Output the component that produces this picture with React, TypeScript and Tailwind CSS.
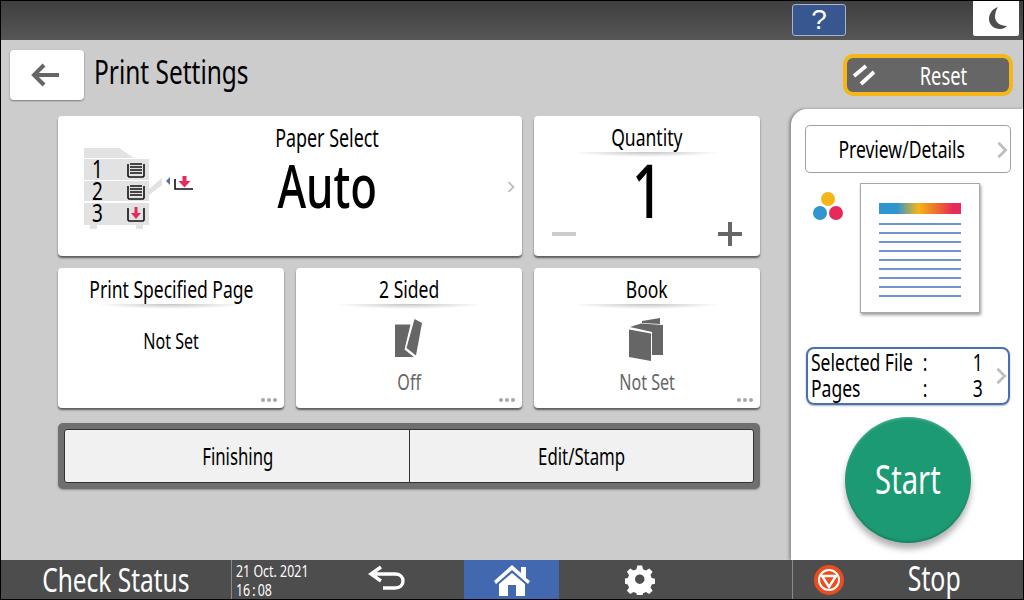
import type { ReactNode } from "react"

// the panel font is a narrow humanist face, so the installed one gets squeezed
function Narrow({ children, left }: { children: ReactNode; left?: boolean }) {
  return (
    <span className={`inline-block whitespace-nowrap scale-x-[0.73] ${left ? "origin-left" : "origin-center"}`}>
      {children}
    </span>
  )
}

function Rule() {
  return <div className="h-[5px] w-[150px] bg-[radial-gradient(ellipse_at_top,#c4c4c4_0%,#ffffff_70%)]" />
}

function Dots() {
  return (
    <div className="absolute right-[7px] bottom-[6px] flex gap-[2px]">
      <span className="w-[4px] h-[4px] rounded-full bg-[#a8a8a8]" />
      <span className="w-[4px] h-[4px] rounded-full bg-[#a8a8a8]" />
      <span className="w-[4px] h-[4px] rounded-full bg-[#a8a8a8]" />
    </div>
  )
}

function Chevron({ className }: { className: string }) {
  return (
    <svg viewBox="0 0 12 20" className={className} fill="none" stroke="currentColor" strokeWidth="3">
      <polyline points="2,2 10,10 2,18" />
    </svg>
  )
}

function TrayFull() {
  return (
    <svg viewBox="0 0 18 15" className="w-[18px] h-[15px]">
      <path d="M1 1v12l1 1h14l1-1V1" fill="none" stroke="#111" strokeWidth="1.6" />
      <path d="M3 1h12M3 4h12M3 7h12M3 10h12" stroke="#111" strokeWidth="1.5" />
    </svg>
  )
}

function TrayEmpty() {
  return (
    <svg viewBox="0 0 18 15" className="w-[18px] h-[15px]">
      <path d="M1 1v12l1 1h14l1-1V1" fill="none" stroke="#111" strokeWidth="1.6" />
      <path d="M7.500 0h3v6h3.500l-5 6-5-6h3.500z" fill="#e8295c" />
    </svg>
  )
}

function PaperIcon() {
  return (
    <div className="relative w-[116px] h-[82px] shrink-0">
      <svg viewBox="0 0 116 82" className="w-[116px] h-[82px]">
        <path d="M0 0h35l15 10H0z" fill="#e2e2e2" />
        <rect x="0" y="11" width="65" height="21" fill="#e2e2e2" />
        <rect x="0" y="33" width="65" height="20" fill="#e2e2e2" />
        <rect x="0" y="55" width="65" height="22" fill="#e2e2e2" />
        <rect x="6" y="77" width="7" height="4" fill="#e2e2e2" />
        <rect x="52" y="77" width="7" height="4" fill="#e2e2e2" />
        <path d="M65 41L78 30v7L65 47z" fill="#e2e2e2" />
        <path d="M82 33l4-4v8z" fill="#4a72b8" />
        <path d="M91 31v10h18" fill="none" stroke="#111" strokeWidth="1.6" />
        <path d="M98.500 28h4v5h4l-6 6.500-6-6.500h4z" fill="#e8295c" />
      </svg>
      <div className="absolute left-[8px] top-[9px] flex flex-col text-[26px] leading-[22px] text-black">
        <Narrow left>1</Narrow>
        <Narrow left>2</Narrow>
        <Narrow left>3</Narrow>
      </div>
      <div className="absolute left-[43px] top-[15px] flex flex-col gap-[7px]">
        <TrayFull />
        <TrayFull />
        <TrayEmpty />
      </div>
    </div>
  )
}

function SettingCard({ title, children, dots }: { title: string; children: ReactNode; dots?: boolean }) {
  return (
    <div className="relative w-[226px] h-[140px] bg-white rounded-[4px] shadow-[0_2px_2px_rgba(0,0,0,0.55)] flex flex-col items-center pt-[6px]">
      <div className="text-[24px] leading-[30px] text-black">
        <Narrow>{title}</Narrow>
      </div>
      <Rule />
      {children}
      {dots && <Dots />}
    </div>
  )
}

export default function App() {
  return (
    <div className="relative w-[1024px] h-[600px] overflow-hidden flex flex-col bg-[#cccccc] font-['Noto_Sans',sans-serif]">
      {/* Top bar */}
      <div className="h-[40px] shrink-0 flex items-start justify-end bg-[linear-gradient(#3e3e3e,#565656)] pr-[5px]">
        <div className="mt-[4px] mr-[127px] w-[54px] h-[32px] rounded-[3px] border border-[#a9b4c9] bg-[#38568f] flex items-center justify-center font-['Liberation_Sans',sans-serif] text-[28px] leading-[28px] text-white">
          ?
        </div>
        <div className="w-[46px] h-[36px] bg-white rounded-b-[2px] flex items-center justify-center">
          <svg viewBox="0 0 18 22" className="w-[18px] h-[22px] ml-[3px]">
            <path d="M9 0C3 2 0 7 0 12c0 6 5 10 11 10 3 0 5-1 7-3-7 0-12-4-12-9 0-4 1-7 3-10z" fill="#4d4d4d" />
          </svg>
        </div>
      </div>

      {/* Title row */}
      <div className="h-[69px] shrink-0 flex items-center pl-[10px] pr-[11px]">
        <div className="w-[74px] h-[50px] bg-white rounded-[4px] shadow-[0_1px_2px_rgba(0,0,0,0.4)] flex items-center justify-center">
          <svg viewBox="0 0 28 24" className="w-[28px] h-[24px] mr-[4px]">
            <path d="M13 2L3 12l10 10M3 12h25" fill="none" stroke="#666" strokeWidth="4" />
          </svg>
        </div>
        <div className="ml-[10px] flex-1 pb-[7px] text-[33.500px] leading-[40px] text-black">
          <Narrow left>Print Settings</Narrow>
        </div>
        <div className="w-[170px] h-[42px] rounded-[10px] border-[4px] border-[#f5b617] bg-[#666666] flex items-center pl-[5px] text-white">
          <svg viewBox="0 0 24 22" className="w-[24px] h-[22px] shrink-0">
            <path d="M2 12L14 2M9 20L22 8" stroke="#fff" strokeWidth="3.800" fill="none" />
          </svg>
          <div className="flex-1 pl-[1px] text-center text-[25px] leading-[30px]">
            <Narrow>Reset</Narrow>
          </div>
        </div>
      </div>

      {/* Content */}
      <div className="flex-1 flex min-h-0">
        <div className="flex-1 pl-[58px] pt-[7px]">
          <div className="flex gap-[12px]">
            <div className="relative w-[464px] h-[140px] bg-white rounded-[4px] shadow-[0_2px_2px_rgba(0,0,0,0.55)] flex items-center pl-[26px]">
              <div className="pt-[6px]">
                <PaperIcon />
              </div>
              <div className="absolute left-0 right-0 top-[7px] text-center pl-[74px] text-[24.500px] leading-[30px] text-black">
                <Narrow>Paper Select</Narrow>
              </div>
              <div className="absolute left-0 right-0 top-[29px] text-center pl-[75px] text-[60px] font-medium leading-[80px] text-black">
                <Narrow>Auto</Narrow>
              </div>
              <Chevron className="absolute right-[7px] top-[65px] w-[8px] h-[12px] text-[#bdbdbd]" />
            </div>
            <SettingCard title="Quantity">
              <div className="text-[75px] font-medium leading-[78px] -mt-[7px] text-black">
                <Narrow>1</Narrow>
              </div>
              <span className="absolute left-[18px] bottom-[20px] w-[24px] h-[4px] bg-[#cccccc]" />
              <svg viewBox="0 0 24 24" className="absolute right-[18px] bottom-[10px] w-[24px] h-[24px]">
                <path d="M12 0v24M0 12h24" stroke="#666" strokeWidth="4" />
              </svg>
            </SettingCard>
          </div>

          <div className="flex gap-[12px] mt-[12px]">
            <SettingCard title="Print Specified Page" dots>
              <div className="mt-[17px] text-[22px] leading-[28px] text-black">
                <Narrow>Not Set</Narrow>
              </div>
            </SettingCard>
            <SettingCard title="2 Sided" dots>
              <svg viewBox="0 0 28 38" className="mt-[10px] w-[28px] h-[38px]">
                <path d="M0 5.500H15.500L9.500 30.500 19 38H0z" fill="#666" />
                <path d="M19.500 0L27 4 21 36.500 11.500 29z" fill="#666" />
              </svg>
              <div className="mt-[10px] text-[22px] leading-[28px] text-[#666]">
                <Narrow>Off</Narrow>
              </div>
            </SettingCard>
            <SettingCard title="Book" dots>
              <svg viewBox="0 0 36 44" className="mt-[9px] w-[36px] h-[44px]">
                <path d="M13 3L31 0v6L13 5z" fill="#666" />
                <path d="M1 9L12 5.500 34 7v30H23V14z" fill="#666" />
                <path d="M0 11.500L22 15.500V43L0 39z" fill="#666" />
              </svg>
              <div className="mt-[5px] text-[22px] leading-[28px] text-[#666]">
                <Narrow>Not Set</Narrow>
              </div>
            </SettingCard>
          </div>

          <div className="mt-[15px] w-[702px] h-[66px] rounded-[5px] bg-[#6f6f6f] p-[6px] shadow-[0_1px_2px_rgba(0,0,0,0.3)]">
            <div className="h-[54px] rounded-[3px] bg-[#f1f1f1] border border-[#333] flex text-[23px] text-black">
              <div className="w-[345px] pl-[2px] border-r border-[#333] flex items-center justify-center">
                <Narrow>Finishing</Narrow>
              </div>
              <div className="flex-1 flex items-center justify-center">
                <Narrow>Edit/Stamp</Narrow>
              </div>
            </div>
          </div>
        </div>

        {/* Right panel */}
        <div className="w-[233px] shrink-0 bg-white rounded-tl-[16px] shadow-[-2px_0_3px_rgba(0,0,0,0.3)] pl-[14px] pr-[13px] pt-[16px] flex flex-col">
          <div className="relative w-[206px] h-[48px] rounded-[5px] border border-[#a0a0a0] flex items-center justify-center pr-[12px] text-[24px] text-black">
            <Narrow>Preview/Details</Narrow>
            <Chevron className="absolute right-[2px] top-[15px] w-[12px] h-[18px] text-[#bdbdbd]" />
          </div>
          <div className="relative mt-[10px] h-[130px]">
            <div className="absolute left-[8px] top-[9px] w-[31px] h-[29px]">
              <span className="absolute left-[8px] top-0 w-[14px] h-[14px] rounded-full bg-[#f5b617]" />
              <span className="absolute left-0 top-[14px] w-[14px] h-[14px] rounded-full bg-[#2f96d0]" />
              <span className="absolute left-[16px] top-[14px] w-[14px] h-[14px] rounded-full bg-[#e8295c]" />
            </div>
            <div className="absolute left-[55px] top-0 w-[120px] h-[130px] bg-white border border-[#a8a8a8] shadow-[1px_2px_3px_rgba(0,0,0,0.4)] pl-[18px] pt-[19px]">
              <div className="w-[82px] h-[11px] bg-[linear-gradient(90deg,#2f96d0_0%,#2f96d0_22%,#f5b617_48%,#ec6a2c_72%,#e8295c_90%)]" />
              <div className="mt-[9px] flex flex-col gap-[7px]">
                {[0, 1, 2, 3, 4, 5, 6, 7, 8].map((line) => (
                  <div key={line} className="w-[82px] h-[2px] bg-[#6f94cf]" />
                ))}
              </div>
            </div>
          </div>
          <div className="relative mt-[34px] ml-[1px] w-[204px] h-[58px] rounded-[8px] border-[2px] border-[#4a6fb5] pl-[3px] pb-[3px] text-[24px] leading-[26px] text-black flex flex-col justify-center shadow-[0_1px_2px_rgba(0,0,0,0.3)]">
            <div className="flex">
              <span className="w-[111px]"><Narrow left>Selected File</Narrow></span>
              <span className="w-[4px]"><Narrow>:</Narrow></span>
              <span className="w-[59px] text-right"><Narrow>1</Narrow></span>
            </div>
            <div className="flex">
              <span className="w-[111px]"><Narrow left>Pages</Narrow></span>
              <span className="w-[4px]"><Narrow>:</Narrow></span>
              <span className="w-[59px] text-right"><Narrow>3</Narrow></span>
            </div>
            <Chevron className="absolute right-[1px] top-[18px] w-[12px] h-[18px] text-[#bdbdbd]" />
          </div>
          <div className="mt-[12px] ml-[40px] w-[126px] h-[126px] rounded-full bg-[#1c9a74] shadow-[0_6px_6px_rgba(0,0,0,0.3),inset_0_2px_2px_rgba(255,255,255,0.15),inset_0_-2px_2px_rgba(0,0,0,0.15)] flex items-center justify-center pb-[2px] text-[40px] text-white">
            <Narrow>Start</Narrow>
          </div>
        </div>
      </div>

      {/* Bottom bar */}
      <div className="h-[40px] shrink-0 bg-[#4d4d4d] flex items-stretch text-white">
        <div className="w-[231px] flex items-center justify-center pl-[1px] pb-[3px] text-[33.500px] leading-[38px]">
          <Narrow>Check Status</Narrow>
        </div>
        <div className="w-[1px] bg-[#8a8a8a]" />
        <div className="w-[113px] pl-[4px] pt-[1px] text-[17px] leading-[19px]">
          <div><Narrow left>21 Oct. 2021</Narrow></div>
          <div><Narrow left>16{"\u2009"}:{"\u2009"}08</Narrow></div>
        </div>
        <div className="w-[119px] flex items-center justify-center pb-[4px] pr-[36px]">
          <svg viewBox="0 0 38 28" className="w-[38px] h-[28px] shrink-0">
            <path d="M13 3L3 10l10 7M3 10h24c5 0 8 3 8 7s-3 7-8 7H15" fill="none" stroke="#fff" strokeWidth="3.400" />
          </svg>
        </div>
        <div className="w-[95px] bg-[#4268b0] flex items-center justify-center">
          <svg viewBox="0 0 38 32" className="w-[38px] h-[32px]">
            <path d="M1 17L19 1l9 8V3h5v11l4 3-2 3L19 6 3 20z" fill="#fff" />
            <path d="M6 20L19 9l13 11v12H23V21h-8v11H6z" fill="#fff" />
          </svg>
        </div>
        <div className="w-[233px] flex items-center justify-start pl-[66px]">
          <svg viewBox="0 0 30 30" className="w-[30px] h-[30px] shrink-0">
            <path
              fill="#fff"
              fillRule="evenodd"
              d="M12.500 1h5l1 4 3 1.300 3.500-2.200 3.500 3.500-2.200 3.500 1.300 3 4 1v5l-4 1-1.300 3 2.200 3.500-3.500 3.500-3.500-2.200-3 1.300-1 4h-5l-1-4-3-1.300-3.500 2.200-3.500-3.500 2.200-3.500-1.300-3-4-1v-5l4-1 1.300-3-2.200-3.500 3.500-3.500 3.500 2.200 3-1.300zM15 10.500a5 5 0 1 0 0 10 5 5 0 0 0 0-10z"
              transform="translate(0.500 -0.500) scale(0.95)"
            />
          </svg>
        </div>
        <div className="w-[1px] bg-[#8a8a8a]" />
        <div className="flex-1 flex items-center pl-[21px]">
          <svg viewBox="0 0 30 30" className="w-[30px] h-[30px] shrink-0">
            <circle cx="15" cy="15" r="15" fill="#e84e1f" />
            <circle cx="15" cy="15" r="10" fill="none" stroke="#fff" strokeWidth="2" />
            <path d="M8 11h14l-7 11z" fill="none" stroke="#fff" strokeWidth="2.400" />
          </svg>
          <div className="flex-1 text-center pb-[5px] text-[34px] leading-[38px]">
            <Narrow>Stop</Narrow>
          </div>
        </div>
      </div>
      <div className="absolute inset-0 border border-black pointer-events-none" />
    </div>
  )
}
